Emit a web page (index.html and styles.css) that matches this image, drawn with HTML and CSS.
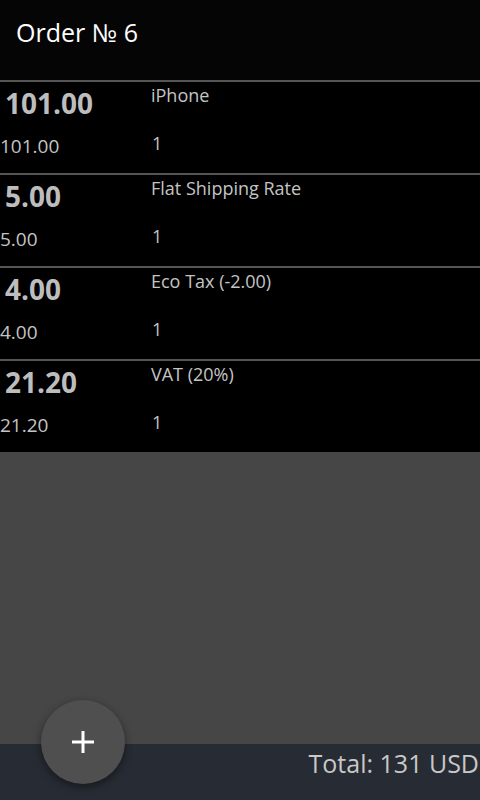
FILE: index.html
```html
<!DOCTYPE html>
<html lang="en">
<head>
<meta charset="UTF-8" />
<meta name="viewport" content="width=device-width, initial-scale=1" />
<title>Order № 6</title>
<link rel="stylesheet" href="styles.css">
</head>
<body>
<div class="screen">
  <header class="toolbar">Order № 6</header>

  <ul class="lines">
    <li class="line">
      <div class="line-amount">101.00</div>
      <div class="line-name">iPhone</div>
      <div class="line-price">101.00</div>
      <div class="line-qty">1</div>
    </li>
    <li class="line">
      <div class="line-amount">5.00</div>
      <div class="line-name">Flat Shipping Rate</div>
      <div class="line-price">5.00</div>
      <div class="line-qty">1</div>
    </li>
    <li class="line">
      <div class="line-amount">4.00</div>
      <div class="line-name">Eco Tax (-2.00)</div>
      <div class="line-price">4.00</div>
      <div class="line-qty">1</div>
    </li>
    <li class="line">
      <div class="line-amount">21.20</div>
      <div class="line-name">VAT (20%)</div>
      <div class="line-price">21.20</div>
      <div class="line-qty">1</div>
    </li>
  </ul>

  <div class="empty"></div>

  <footer class="totals">Total: 131 USD</footer>

  <button class="fab" type="button" aria-label="Add item">
    <svg width="22" height="22" viewBox="0 0 22 22" aria-hidden="true">
      <path d="M11 0v22M0 11h22" stroke="#fff" stroke-width="3" fill="none" />
    </svg>
  </button>
</div>
</body>
</html>
```

FILE: styles.css
```css
:root {
  --text-light: #c4c4c4;
  --divider: #555;
  --empty-bg: #464646;
  --footer-bg: #272b33;
  --fab-bg: #4f4f4f;
  --font-family: 'Open Sans', 'Noto Sans', sans-serif;
}

* {
  box-sizing: border-box;
}

body {
  margin: 0;
  font-family: var(--font-family);
  background: #000;
  color: var(--text-light);
}

.screen {
  position: relative;
  width: 480px;
  height: 800px;
  display: flex;
  flex-direction: column;
  overflow: hidden;
}

.toolbar {
  height: 80px;
  padding: 12px 16px 0;
  background: #050505;
  color: #fff;
  font-size: 25px;
  font-weight: 500;
  line-height: 40px;
}

.lines {
  list-style: none;
  margin: 0;
  padding: 0;
  background: #000;
}

.line {
  height: 93px;
  border-top: 2px solid var(--divider);
  display: grid;
  grid-template-columns: 151px 1fr;
  grid-template-rows: 49px auto;
}

.line-amount {
  padding: 2px 0 0 5px;
  font-size: 28px;
  font-weight: 700;
  line-height: 38px;
  color: #bdbdbd;
}

.line-name {
  padding-top: 1px;
  font-size: 18px;
  line-height: 24px;
}

.line-price {
  padding-top: 3px;
  font-size: 19px;
  line-height: 24px;
}

.line-qty {
  padding-left: 1px;
  font-size: 18px;
  line-height: 24px;
}

.empty {
  flex: 1;
  background: var(--empty-bg);
}

.totals {
  height: 56px;
  padding: 2px 1px 0 0;
  background: var(--footer-bg);
  text-align: right;
  font-size: 25px;
  line-height: 34px;
  color: #c8c8c8;
}

.fab {
  position: absolute;
  left: 41px;
  top: 700px;
  width: 84px;
  height: 84px;
  border: none;
  border-radius: 50%;
  background: var(--fab-bg);
  box-shadow: 0 3px 8px rgb(0 0 0 / 0.45);
  display: flex;
  align-items: center;
  justify-content: center;
  padding: 0;
  cursor: pointer;
}
```
